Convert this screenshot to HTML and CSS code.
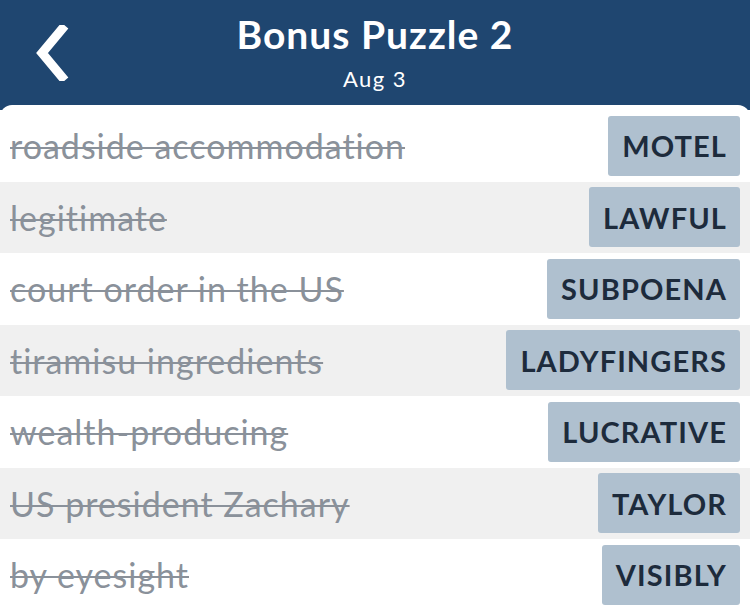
FILE: index.html
```html
<!DOCTYPE html>
<html>
<head>
<meta charset="utf-8">
<link rel="stylesheet" href="styles.css">
</head>
<body>
<div class="app">
  <header class="topbar">
    <div class="back">
      <svg width="40" height="56" viewBox="0 0 40 56"><path d="M28 4 L8 28 L28 52" fill="none" stroke="#fff" stroke-width="9" stroke-linecap="square" stroke-linejoin="miter"/></svg>
    </div>
    <div class="titles">
      <div class="title">Bonus Puzzle 2</div>
      <div class="subtitle">Aug 3</div>
    </div>
    <div></div>
  </header>
  <main class="card">
    <div class="row"><span class="clue">roadside accommodation</span><span class="answer">MOTEL</span></div>
    <div class="row alt"><span class="clue">legitimate</span><span class="answer">LAWFUL</span></div>
    <div class="row"><span class="clue">court order in the US</span><span class="answer">SUBPOENA</span></div>
    <div class="row alt"><span class="clue">tiramisu ingredients</span><span class="answer">LADYFINGERS</span></div>
    <div class="row"><span class="clue">wealth-producing</span><span class="answer">LUCRATIVE</span></div>
    <div class="row alt"><span class="clue">US president Zachary</span><span class="answer">TAYLOR</span></div>
    <div class="row"><span class="clue">by eyesight</span><span class="answer">VISIBLY</span></div>
  </main>
</div>
</body>
</html>
```
FILE: styles.css
```css
html, body {
  margin: 0;
  padding: 0;
  background: #1f4670;
}
body {
  font-family: "Lato", "Noto Sans", sans-serif;
  width: 750px;
  height: 608px;
  overflow: hidden;
}
.app {
  background: #1f4670;
}
.topbar {
  height: 105px;
  box-sizing: border-box;
  padding-top: 12px;
  display: grid;
  grid-template-columns: 110px 1fr 110px;
  align-items: start;
  color: #fff;
}
.back {
  padding-left: 34px;
  padding-top: 13px;
  display: flex;
}
.titles {
  text-align: center;
}
.title {
  font-size: 39px;
  font-weight: 700;
  line-height: 44px;
  letter-spacing: 1px;
}
.subtitle {
  margin-top: 10px;
  font-size: 22px;
  line-height: 26px;
  letter-spacing: 1.5px;
}
.card {
  background: #fff;
  border-radius: 12px 12px 0 0;
  padding-top: 5px;
  min-height: 520px;
}
.row {
  height: 71.5px;
  display: flex;
  align-items: center;
  justify-content: space-between;
  padding: 0 10px;
  background: #fff;
}
.row.alt {
  background: #f0f0f0;
}
.clue {
  font-size: 34px;
  letter-spacing: 1px;
  color: #8a919a;
  text-decoration: line-through;
  text-decoration-thickness: 2px;
}
.answer {
  height: 60px;
  display: flex;
  align-items: center;
  padding: 0 13px 0 14px;
  background: #afc0cf;
  border-radius: 3px;
  color: #1d2b3c;
  font-weight: 700;
  font-size: 29px;
  letter-spacing: 1.1px;
}
```
